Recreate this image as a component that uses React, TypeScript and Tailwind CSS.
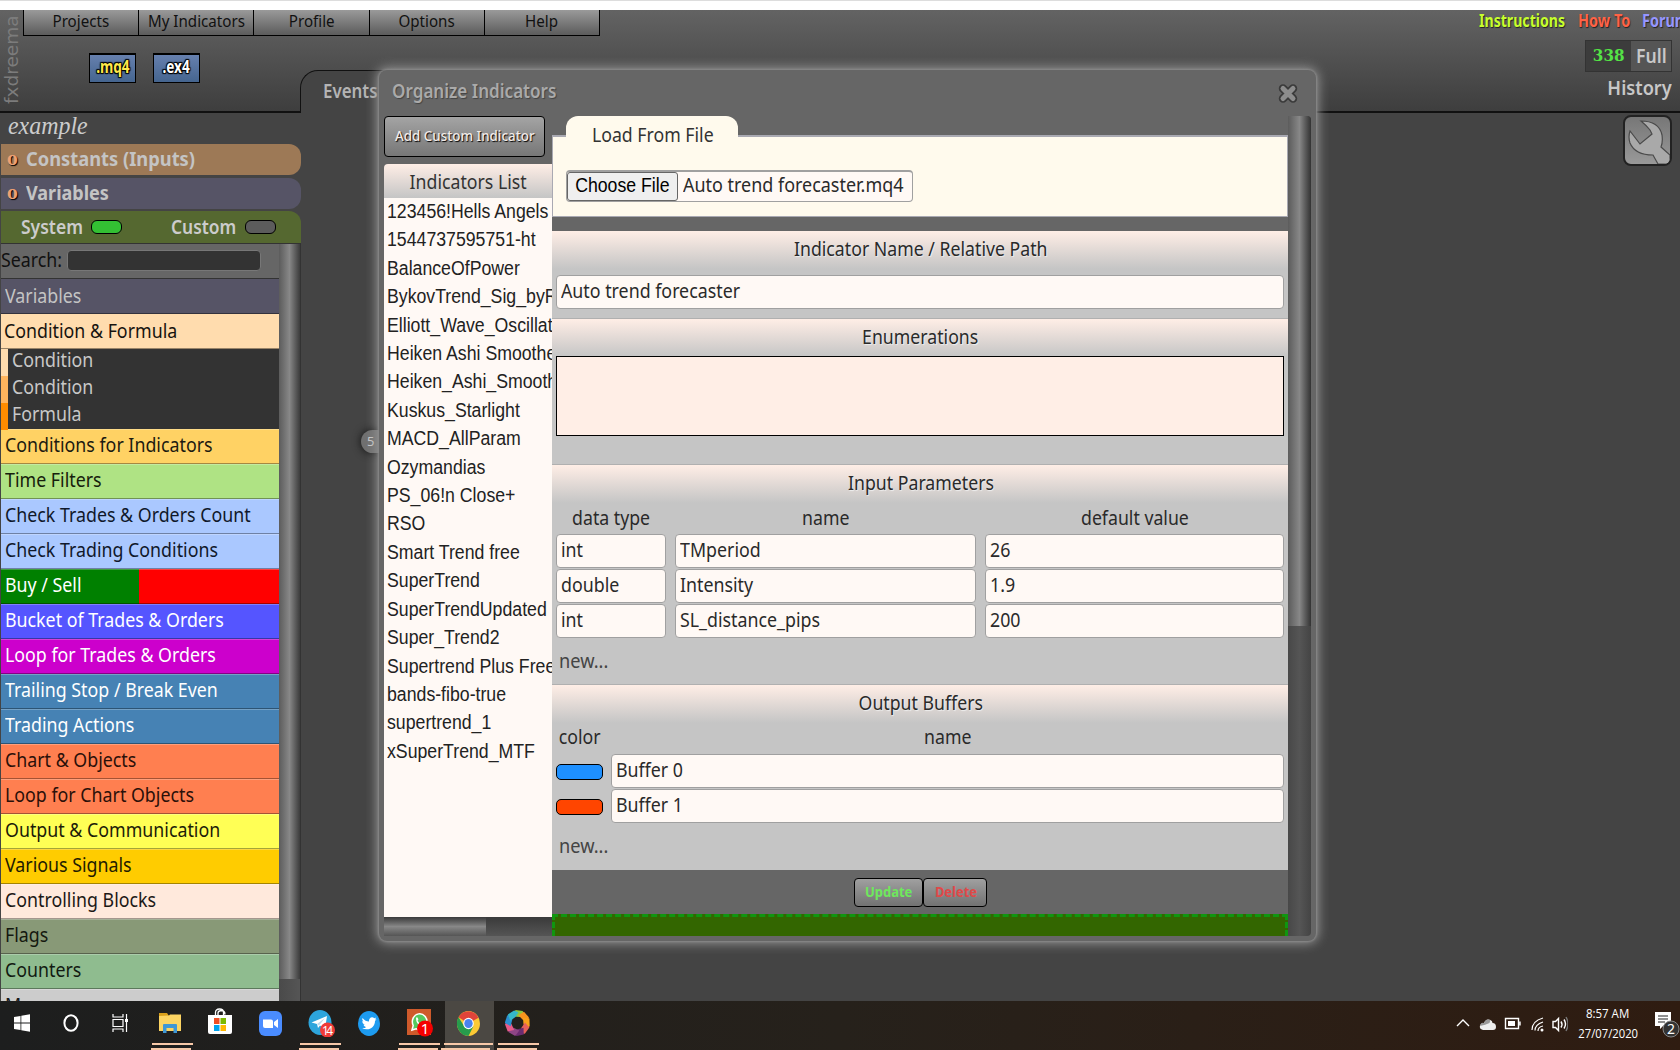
import type { ReactNode } from "react"
import clsx from "clsx"

const menu = ["Projects", "My Indicators", "Profile", "Options", "Help"]

const categories = [
  { name: "Conditions for Indicators", color: "bg-[#ffd264] text-[#1c1a10]" },
  { name: "Time Filters", color: "bg-[#afe384] text-[#16200c]" },
  { name: "Check Trades & Orders Count", color: "bg-[#aac8ff] text-[#10182a]" },
  { name: "Check Trading Conditions", color: "bg-[#aac8ff] text-[#10182a]" },
  { name: "Buy / Sell", color: "bg-[linear-gradient(to_right,#008000_49.8%,#ff0000_49.8%)] text-white" },
  { name: "Bucket of Trades & Orders", color: "bg-[#5555ff] text-white" },
  { name: "Loop for Trades & Orders", color: "bg-[#cc00cc] text-white" },
  { name: "Trailing Stop / Break Even", color: "bg-[#4682b4] text-white" },
  { name: "Trading Actions", color: "bg-[#4682b4] text-white" },
  { name: "Chart & Objects", color: "bg-[#ff7f50] text-[#2b1009]" },
  { name: "Loop for Chart Objects", color: "bg-[#ff7f50] text-[#2b1009]" },
  { name: "Output & Communication", color: "bg-[#ffff55] text-[#1c1c08]" },
  { name: "Various Signals", color: "bg-[#ffcc00] text-[#221b00]" },
  { name: "Controlling Blocks", color: "bg-[#ffe9dc] text-[#1c1816]" },
  { name: "Flags", color: "bg-[#889977] text-[#14180f]" },
  { name: "Counters", color: "bg-[#8fbc8f] text-[#121a12]" },
  { name: "More", color: "bg-[#cccccc] text-[#1a1a1a]" },
]

const blocks = [
  { name: "Condition", color: "bg-[#ffdcae]" },
  { name: "Condition", color: "bg-[#ffb55e]" },
  { name: "Formula", color: "bg-[#ff8c00]" },
]

const indicators = [
  "123456!Hells Angels",
  "1544737595751-ht",
  "BalanceOfPower",
  "BykovTrend_Sig_byRe",
  "Elliott_Wave_Oscillator",
  "Heiken Ashi Smoothed",
  "Heiken_Ashi_Smoothed",
  "Kuskus_Starlight",
  "MACD_AllParam",
  "Ozymandias",
  "PS_06!n Close+",
  "RSO",
  "Smart Trend free",
  "SuperTrend",
  "SuperTrendUpdated",
  "Super_Trend2",
  "Supertrend Plus Free",
  "bands-fibo-true",
  "supertrend_1",
  "xSuperTrend_MTF",
]

const params = [
  { type: "int", name: "TMperiod", value: "26" },
  { type: "double", name: "Intensity", value: "1.9" },
  { type: "int", name: "SL_distance_pips", value: "200" },
]

const buffers = [
  { name: "Buffer 0", color: "bg-[#1e90ff]" },
  { name: "Buffer 1", color: "bg-[#ff4500]" },
]

// Slightly condensed label
function T({ children, className = "origin-left scale-x-[.89]" }: { children: ReactNode; className?: string }) {
  return <span className={clsx("inline-block whitespace-nowrap", className)}>{children}</span>
}

function Header() {
  return (
    <header className="relative flex h-[103px] shrink-0 border-b-2 border-[#111] bg-linear-to-b from-[#636363] to-[#3e3e3e]">
      <div className="h-[94px] w-[23px] shrink-0 rotate-180 font-['DejaVu_Sans',sans-serif] text-[18.5px] leading-[23px] text-[#7c7c7c] [writing-mode:vertical-rl]">
        <span className="inline-block whitespace-nowrap">fxdreema</span>
      </div>
      <div className="w-[577px] shrink-0">
        <nav className="flex h-[26px] border-b border-l border-black">
          {menu.map((item) => (
            <div
              key={item}
              className="flex flex-1 items-center justify-center border-r border-black bg-linear-to-b from-[#9a9a9a] to-[#5c5c5c] pb-1 text-[17px] text-[#111]"
            >
              <T className="origin-center scale-x-[.89]">{item}</T>
            </div>
          ))}
        </nav>
        <div className="flex gap-[17px] pt-[17px] pl-[66px] text-[17px] font-bold">
          {[".mq4", ".ex4"].map((ext) => (
            <div
              key={ext}
              className={clsx(
                "flex h-[30px] w-[47px] items-center justify-center border border-t-2 border-black bg-linear-to-b from-[#6680ae] to-[#45658f] pb-[3px] [text-shadow:1px_1px_1px_#000,-1px_-1px_1px_#000,1px_-1px_1px_#000,-1px_1px_1px_#000,0_0_2px_#000]",
                ext === ".mq4" ? "text-[#ffe94a]" : "text-white",
              )}
            >
              <T className="origin-center scale-x-[.8]">{ext}</T>
            </div>
          ))}
        </div>
      </div>
      <div className="absolute -bottom-[2px] left-[300px] flex h-[43px] w-[700px] rounded-tl-[18px] border-t border-l border-[#111] bg-[#444] pl-[22px] text-[19px] leading-[40px] font-semibold text-[#b4b4b4]">
        <T>Events</T>
      </div>
      <div className="ml-auto flex w-[210px] flex-col">
        <div className="flex h-[29px] pl-[9px] text-[17px] leading-[22px] font-bold [text-shadow:1px_1px_1px_#222]">
          <span className="w-[99px] text-[#c6ff2e]"><T className="origin-left scale-x-[.83]">Instructions</T></span>
          <span className="w-[66px] text-[#ff6347]"><T className="origin-left scale-x-[.85]">How To</T></span>
          <span className="pl-[2px] text-[#9696ff]"><T className="origin-left scale-x-[.85]">Forum</T></span>
        </div>
        <div className="mt-px mr-2 flex h-[32px] w-[87px] items-center self-end border border-[#333] bg-[#555] font-bold">
          <span className="flex h-full w-[45px] items-center justify-center bg-[#3c3c3c] font-['DejaVu_Serif',serif] text-[16px] text-[#54e346]">
            <T className="origin-center scale-x-95">338</T>
          </span>
          <span className="pb-px pl-[5px] text-[20px] font-semibold text-[#c8c8c8]"><T className="origin-left scale-x-[.88]">Full</T></span>
        </div>
        <div className="mr-2 self-end text-[20px] leading-[32px] font-semibold text-[#c8c8c8]">
          <T className="origin-right scale-x-[.91]">History</T>
        </div>
      </div>
    </header>
  )
}

function Sidebar() {
  return (
    <aside className="flex w-[301px] shrink-0 flex-col pl-px">
      <div className="h-[31px] pl-[7px] font-['Liberation_Serif',serif] text-[26px] leading-[25px] text-[#ccc] italic">
        <T className="origin-left scale-x-[.92]">example</T>
      </div>
      <div className="mb-[3px] flex h-[31px] items-center rounded-r-xl bg-[#9d7956] pb-0.5 pl-[6px] text-[20px] font-bold text-[#c4c4c4]">
        <span className="w-[19px] font-['DejaVu_Serif',serif] text-[18px] text-[#eda073] [text-shadow:1px_1px_1px_#000]"><T>o</T></span>
        <T className="origin-left scale-x-[.915]">Constants (Inputs)</T>
      </div>
      <div className="mb-[2px] flex h-[31px] items-center rounded-r-xl bg-[#565466] pb-0.5 pl-[6px] text-[20px] font-bold text-[#c4c4c4]">
        <span className="w-[19px] font-['DejaVu_Serif',serif] text-[18px] text-[#eda073] [text-shadow:1px_1px_1px_#000]"><T>o</T></span>
        <T className="origin-left scale-x-[.9]">Variables</T>
      </div>
      <div className="flex h-[33px] items-center rounded-tr-xl border-b border-[#333] bg-[#556830] pl-[20px] text-[20px] font-semibold text-[#ccc]">
        <span className="w-[70px] pb-px"><T className="origin-left scale-x-[.875]">System</T></span>
        <span className="h-[14px] w-[31px] rounded-md border border-black bg-[#33c033]" />
        <span className="ml-[49px] w-[74px] pb-px"><T className="origin-left scale-x-[.87]">Custom</T></span>
        <span className="h-[14px] w-[31px] rounded-md border border-black bg-[#5c5c5c]" />
      </div>
      <div className="flex min-h-0 flex-1">
        <div className="w-[278px] overflow-hidden text-[20px]">
          <div className="flex h-[35px] items-center border-b border-[#333] bg-[#666] text-[#111]">
            <span className="w-[66px] pb-[3px]"><T>Search:</T></span>
            <span className="mb-px h-[21px] w-[194px] rounded-sm border border-[#777] bg-[#333]" />
          </div>
          <div className="h-[35px] border-b border-black/40 bg-[#565466] pl-1 leading-[33px] text-[#c4c4c4]"><T>Variables</T></div>
          <div className="h-[35px] border-b border-black/40 bg-[#ffdcae] pl-[3px] leading-[33px] text-[#16130f]"><T>Condition & Formula</T></div>
          <div className="h-[81px] bg-[#333] text-[#c8c8c8]">
            {blocks.map((b, i) => (
              <div key={i} className="flex h-[27px] leading-[22px]">
                <span className={clsx("mr-1 w-[7px]", b.color)} />
                <T>{b.name}</T>
              </div>
            ))}
          </div>
          <div className="-mt-px">
            {categories.map((c) => (
              <div key={c.name} className={clsx("h-[35px] border-t border-b border-t-white/25 border-b-black/35 pl-[3.5px] leading-[30px]", c.color)}>
                <T>{c.name}</T>
              </div>
            ))}
          </div>
        </div>
        <div className="flex-1 border-r border-[#333] bg-linear-to-r from-[#4a4a4a] to-[#555]">
          <div className="h-[735px] bg-linear-to-r from-[#5c5c5c] via-[#888] via-50% to-[#3c3c3c]" />
        </div>
      </div>
    </aside>
  )
}

function SectionTitle({ children }: { children: ReactNode }) {
  return (
    <div className="h-[38px] bg-linear-to-b from-[#ffeee6] to-[#c5c5c5] text-center leading-[36px] [text-shadow:1px_1px_1px_#eee]">
      <T className="origin-center translate-x-[.5px] scale-x-[.885]">{children}</T>
    </div>
  )
}

function Field({ children, className }: { children: ReactNode; className?: string }) {
  return (
    <div className={clsx("h-[34px] rounded border border-[#a0a0a0] bg-[#fff9f5] pl-1 leading-[30px]", className)}>
      <T>{children}</T>
    </div>
  )
}

function IndicatorsPanel() {
  return (
    <div className="flex w-[168px] shrink-0 flex-col">
      <button className="mb-[7px] flex h-[41px] w-[161px] items-center justify-center rounded border border-black bg-linear-to-b from-[#a4a4a4] to-[#777] pb-px text-[14.5px] font-medium text-[#f4ece8] [text-shadow:1px_1px_1px_#000]">
        <T className="origin-center scale-x-[.92]">Add Custom Indicator</T>
      </button>
      <div className="h-[34px] rounded-tl bg-linear-to-b from-[#ffeee6] to-[#c5c5c5] text-center text-[20px] leading-[36px] text-[#333]">
        <T className="origin-center scale-x-[.885]">Indicators List</T>
      </div>
      <div className="h-[719px] overflow-hidden bg-[#fff9f5] pl-[3px] font-['Liberation_Sans',sans-serif] text-[20px] text-[#222]">
        {indicators.map((name) => (
          <div key={name} className="h-[28.42px] leading-[27.5px]"><T className="origin-left scale-x-[.885]">{name}</T></div>
        ))}
      </div>
      <div className="flex h-[19px] bg-linear-to-b from-[#3a3a3a] to-[#555]">
        <div className="w-[102px] bg-linear-to-b from-[#3a3a3a] via-[#888] to-[#555]" />
      </div>
    </div>
  )
}

function IndicatorForm() {
  return (
    <div className="flex w-[736px] shrink-0 flex-col overflow-hidden text-[20px] text-[#2a2a2a]">
      <div className="z-10 ml-[14px] h-[21px] w-[172px] rounded-t-xl bg-[#fffaed] text-center leading-[37px] text-[#333]">
        <T className="origin-center translate-x-px scale-x-[.885]">Load From File</T>
      </div>
      <div className="-mt-[2px] mb-[14px] h-[82px] border border-t-2 border-[#a9a9b2] bg-[#fffaed] pt-[33px] pl-[13px]">
        <div className="flex h-[32px] w-[347px] rounded border border-t-2 border-[#a0a0a0] bg-[#fff9f5]">
          <span className="flex w-[111px] shrink-0 items-center justify-center rounded-[3px] border border-[#666] bg-[#efefef] pb-1 font-['Liberation_Sans',sans-serif] text-black">
            <T className="origin-center scale-x-[.885]">Choose File</T>
          </span>
          <span className="pl-[5px] leading-[26px]"><T className="origin-left scale-x-[.897]">Auto trend forecaster.mq4</T></span>
        </div>
      </div>

      <div className="h-[87px] bg-[#c5c5c5]">
        <SectionTitle>Indicator Name / Relative Path</SectionTitle>
        <Field className="mx-1 mt-[6px]">Auto trend forecaster</Field>
      </div>

      <div className="h-[146px] border-t border-[#b0b0b0] bg-[#c5c5c5]">
        <SectionTitle>Enumerations</SectionTitle>
        <div className="mx-1 -mt-px h-[80px] border border-black bg-[#ffeee6]" />
      </div>

      <div className="h-[220px] border-t border-[#b0b0b0] bg-[#c5c5c5]">
        <SectionTitle>Input Parameters</SectionTitle>
        <div className="grid grid-cols-[110px_301px_300px] gap-x-[9px] gap-y-px px-1">
          <div className="h-[30px] text-center leading-[29px]"><T className="origin-center scale-x-[.885]">data type</T></div>
          <div className="h-[30px] text-center leading-[29px]"><T className="origin-center scale-x-[.885]">name</T></div>
          <div className="h-[30px] text-center leading-[29px]"><T className="origin-center scale-x-[.885]">default value</T></div>
          {params.map((p) => (
            <div key={p.name} className="contents">
              <Field>{p.type}</Field>
              <Field>{p.name}</Field>
              <Field className="mr-px">{p.value}</Field>
            </div>
          ))}
        </div>
        <div className="pt-[8px] pl-[7px] text-[#444]"><T className="origin-left scale-x-[.91]">new...</T></div>
      </div>

      <div className="h-[186px] border-t border-[#b0b0b0] bg-[#c5c5c5]">
        <SectionTitle>Output Buffers</SectionTitle>
        <div className="grid grid-cols-[47px_673px] gap-x-2 gap-y-px px-1">
          <div className="h-[30px] text-center leading-[27px]"><T className="origin-center scale-x-[.885]">color</T></div>
          <div className="h-[30px] text-center leading-[27px]"><T className="origin-center scale-x-[.885]">name</T></div>
          {buffers.map((b) => (
            <div key={b.name} className="contents">
              <div className={clsx("mt-[10px] h-4 rounded-[5px] border border-black", b.color)} />
              <Field>{b.name}</Field>
            </div>
          ))}
        </div>
        <div className="pt-[8px] pl-[7px] text-[#444]"><T className="origin-left scale-x-[.91]">new...</T></div>
      </div>

      <div className="flex h-[44px] shrink-0 justify-center pt-2 text-[13.5px] font-bold [text-shadow:1px_1px_1px_#000]">
        <button className="h-[29px] w-[69px] rounded border border-black bg-linear-to-b from-[#a0a0a0] to-[#727272] text-[#6ee85c]">
          <T className="origin-center translate-x-px scale-x-[.96]">Update</T>
        </button>
        <button className="h-[29px] w-[64px] rounded border border-black bg-linear-to-b from-[#a0a0a0] to-[#727272] text-[#e04848]">
          <T className="origin-center translate-x-px scale-x-[.96]">Delete</T>
        </button>
      </div>
      <div className="h-[22px] shrink-0 border-3 border-b-0 border-dashed border-[#109610] bg-[#336600]" />
    </div>
  )
}

function Dialog() {
  return (
    <div className="absolute top-[70px] left-[379px] h-[871px] w-[937px] rounded-lg bg-[#666] shadow-[0_0_2px_1px_#888,0_0_12px_2px_#999]">
      <div className="flex h-[46px] justify-between pt-[7px] pr-[18px] pl-[13px]">
        <div className="text-[19.5px] leading-[28px] font-semibold text-[#aaa] [text-shadow:1px_1px_1px_#444]">
          <T className="origin-left scale-x-[.876]">Organize Indicators</T>
        </div>
        <svg className="mt-[6px] h-[21px] w-5" viewBox="0 0 20 21">
          <path d="M5 5.5l10 10M15 5.5l-10 10" stroke="#3a3a3a" strokeWidth="8.5" strokeLinecap="round" />
          <path d="M5 5.5l10 10M15 5.5l-10 10" stroke="#8c8c8c" strokeWidth="5" strokeLinecap="round" />
        </svg>
      </div>
      <div className="flex h-[820px] pl-[5px]">
        <IndicatorsPanel />
        <IndicatorForm />
        <div className="w-[23px] rounded-r bg-linear-to-r from-[#484848] via-[#555] to-[#444]">
          <div className="h-[510px] rounded-tr bg-linear-to-r from-[#5c5c5c] via-[#888] to-[#333]" />
        </div>
      </div>
    </div>
  )
}

function Slot({ children, line }: { children: ReactNode; line?: boolean }) {
  return (
    <div className="relative flex w-[49.5px] items-center justify-center pb-[5px]">
      {children}
      {line && (
        <>
          <span className="absolute bottom-[5px] h-[2px] w-[41px] bg-[#f7c8a8]" />
          <span className="absolute bottom-0 left-[3px] h-[2px] w-[40px] bg-[#f7c8a8]" />
        </>
      )}
    </div>
  )
}

function Taskbar() {
  return (
    <footer className="flex h-[49px] shrink-0 bg-linear-to-r from-[#1d1e1e] via-[#26211b] to-[#2f1c11] text-white">
      <div className="-ml-px flex">
        <Slot>
          <svg className="mr-1 h-[18px] w-4" viewBox="0 0 16 18" fill="white">
            <path d="M0 3l6.5-1v6.5H0zM7.3 1.8L16 .3v8.2H7.3zM0 9.4h6.5V16L0 15zM7.3 9.4H16v8.3l-8.7-1.4z" />
          </svg>
        </Slot>
        <Slot>
          <svg className="mr-1 h-[18px] w-4" viewBox="0 0 16 18" fill="none">
            <ellipse cx="8" cy="9" rx="6.6" ry="7.8" stroke="white" strokeWidth="2" />
          </svg>
        </Slot>
        <Slot>
          <svg className="mr-[6px] h-[18px] w-4" viewBox="0 0 16 18" fill="none" stroke="white" strokeWidth="1.2">
            <path d="M1 0v3h10V0M1 18v-3h10v3M1 5.5h10v7H1zM14.5 0v18" />
            <path d="M13 5h3v3h-3z" fill="white" stroke="none" />
          </svg>
        </Slot>
        <Slot line>
          <svg className="mr-1 h-5 w-[22px]" viewBox="0 0 22 20">
            <path d="M0 0h8l2 3h-10z" fill="#d9a01c" />
            <path d="M0 3l10-.5 1-1h11V18H0z" fill="#fcd462" />
            <path d="M4 20v-8q0-1 1-1h12q1 0 1 1v8h-3.500v-5h-7v5z" fill="#3f97d5" />
          </svg>
        </Slot>
        <Slot>
          <svg className="-mt-1 mr-[3px] h-[26px] w-6" viewBox="0 0 24 26">
            <path d="M7.500 9V4.500q0-3.500 4-3.500t4 3.500V9M10 8V5q0-2 3-2.500 4 0 4 4" fill="none" stroke="white" strokeWidth="1.300" />
            <path d="M0 7h24v17q0 2-2 2H2q-2 0-2-2z" fill="white" />
            <path d="M6 10h5.500v6H6z" fill="#f04e23" />
            <path d="M12.500 10H18v6h-5.500z" fill="#7db900" />
            <path d="M6 17h5.500v6H6z" fill="#00a3ee" />
            <path d="M12.500 17H18v6h-5.500z" fill="#ffb800" />
          </svg>
        </Slot>
        <Slot>
          <svg className="mr-[2px] h-[25px] w-[23px]" viewBox="0 0 23 25">
            <rect width="23" height="25" rx="6" fill="#4a8cff" />
            <path d="M4 8.500h8q2 0 2 2V17H6q-2 0-2-2zM15 11l4-3v9l-4-3z" fill="white" />
          </svg>
        </Slot>
        <Slot line>
          <svg className="ml-px h-[27px] w-[27px]" viewBox="0 0 27 27">
            <ellipse cx="12" cy="12.500" rx="11.500" ry="12.500" fill="#2da5dc" />
            <path d="M3.500 12.500L19 6l-2 13-5-3.500-2 2.500-1-4z" fill="white" />
            <path d="M9 14l8-6-6 7.500z" fill="#b8d8ec" />
            <circle cx="19.500" cy="20" r="7.500" fill="#ef3b38" />
            <text x="19.500" y="24.500" fontSize="12" textAnchor="middle" textLength="11" fill="white" fontFamily="Noto Sans">14</text>
          </svg>
        </Slot>
        <Slot>
          <svg className="mr-[2px] h-[25px] w-[22px]" viewBox="0 0 22 25">
            <ellipse cx="11" cy="12.500" rx="11" ry="12.500" fill="#1d9bf0" />
            <path d="M4.500 7c2 2.500 4 3.500 6.500 3.500C10.500 7 14 5 16.300 7.200l2-.6-1.300 2 1.500-.3-1.500 1.700c0 6-6 10.500-12.800 7.200 2 0 3-.4 4-1.200-1.500-.3-2.300-1.200-2.700-2.300h1.300C5 13 4.300 11.700 4.300 10l1.200.4C4.200 9.300 4 8.200 4.500 7z" fill="white" />
          </svg>
        </Slot>
        <Slot line>
          <svg className="ml-px h-[28px] w-[26px]" viewBox="0 0 26 28">
            <path d="M0 0h24v26H0z" fill="#cf5a2b" />
            <path d="M5 21l1.200-4.500A7.300 8 0 1 1 9 19.700z" fill="#55c95f" stroke="white" strokeWidth="1.500" />
            <path d="M9 9q1-1.500 2 .5t-.5 2q1 2.500 3.500 3 1-2 3 0t-3 2Q9 15.500 9 9z" fill="white" />
            <circle cx="18" cy="19.500" r="8" fill="#f50000" />
            <text x="18" y="25" fontSize="15" textAnchor="middle" fill="white" fontFamily="Noto Sans">1</text>
          </svg>
        </Slot>
        <div className="relative flex w-[49px] items-center justify-center bg-[#4b4843] pr-[2px] pb-[5px]">
          <svg className="h-[25px] w-[23px]" viewBox="0 0 24 24" preserveAspectRatio="none">
            <circle cx="12" cy="12" r="12" fill="#fcc934" />
            <path d="M12 12L1.600 6A12 12 0 0 1 22.400 6.500z" fill="#e0443a" />
            <path d="M1.600 6A12 12 0 0 0 12 24l5-9-10-1z" fill="#279c4c" />
            <circle cx="12" cy="12" r="5.500" fill="white" />
            <circle cx="12" cy="12" r="4.400" fill="#4a83ee" />
          </svg>
          <span className="absolute bottom-[5px] h-[2px] w-full bg-[#f7c8a8]" />
          <span className="absolute right-1 bottom-0 h-[2px] w-full bg-[#f7c8a8]" />
        </div>
        <Slot line>
          <svg className="mr-[2px] h-[26px] w-[25px]" viewBox="-12 -12 24 24" preserveAspectRatio="none">
            {["#8cc63f", "#f7941e", "#f9a01b", "#e8605a", "#6a2c70", "#8e4585", "#e85b8a", "#2b8fd0", "#35b8c8"].map((c, i) => (
              <path key={c} d="M-4-6l2-6 7 1 2 4-5 1.500z" fill={c} transform={`rotate(${i * 40})`} />
            ))}
          </svg>
        </Slot>
      </div>

      <div className="ml-auto flex items-center pb-1">
        <svg className="h-[20px] w-[112px]" viewBox="0 0 112 20" fill="none" stroke="white" strokeWidth="1.400">
          <path d="M1 12l6-6 6 6" />
          <path d="M27 16q-4-1-3-4.500 1-3 4-2.500 2-5 6.500-3 2 1 2 3 3.500 0 3.500 4 0 3-3 3z" fill="#eee" stroke="none" />
          <path d="M24 12q1-4 4-3 2-5 6.500-3l-1 3q-4 2-9.500 3z" fill="#999" stroke="none" />
          <path d="M49.500 4.500h13v10h-13zM64 7.500v4" />
          <path d="M52 7h7v5h-7z" fill="white" stroke="none" />
          <path d="M76 16q0-9 11-12M79 16.500q0-6 8-8.500M82 17q0-4 5-5" strokeWidth="1.200" />
          <circle cx="86" cy="16" r="1.500" fill="white" stroke="none" />
          <path d="M97 7.500h2.500l3-3v12l-3-3H97zM105 7.500q2 3 0 6M108 5.500q3 4.500 0 9" />
          <path d="M110 3q4 7 0 14" stroke="#777" />
        </svg>
        <div className="w-[80px] text-center font-['Open_Sans',sans-serif] text-[12.5px] leading-[20px]">
          <div><T className="origin-center scale-x-[.92]">8:57 AM</T></div>
          <div><T className="origin-center scale-x-[.9]">27/07/2020</T></div>
        </div>
        <svg className="ml-[7px] h-[28px] w-[25px]" viewBox="0 0 25 28">
          <path d="M0 2h16v14H8l-3 3v-3H0z" fill="white" />
          <path d="M3 6h10M3 9h10M3 12h7" stroke="#222" strokeWidth="1.200" />
          <circle cx="16" cy="19" r="8" fill="#333" stroke="#888" />
          <text x="16" y="24" fontSize="14" textAnchor="middle" fill="white" fontFamily="Noto Sans">2</text>
        </svg>
      </div>
    </footer>
  )
}

export default function App() {
  return (
    <div className="relative flex h-[1050px] w-[1680px] flex-col overflow-hidden bg-[#444] font-['Noto_Sans',sans-serif]">
      <div className="h-[10px] shrink-0 border-t border-[#ddd] bg-white" />
      <Header />
      <div className="flex min-h-0 flex-1">
        <Sidebar />
        <main className="relative flex-1">
          <div className="absolute top-[317px] left-[60px] flex h-[23px] w-8 items-center rounded-l-full bg-[#707070] pl-[6px] text-[13px] text-[#ccc] shadow-[0_0_8px_#111]">
            5
          </div>
          <div className="absolute top-[2px] right-2 h-[51px] w-[49px] overflow-hidden rounded-lg border-2 border-[#222] bg-linear-to-b from-[#777] to-[#999]">
            <svg className="h-full w-full" viewBox="0 0 45 47">
              <path
                d="M16 4Q34 4 37 18q1 7-1 12l9 8v9H33l-5-9Q10 38 5 26 3 20 5 14l10 13 12-10-2-4q-3-4-9-9z"
                fill="#a9a9a9"
                stroke="#4a4a4a"
                strokeWidth="1.200"
              />
            </svg>
          </div>
        </main>
      </div>
      <Taskbar />
      <Dialog />
    </div>
  )
}
